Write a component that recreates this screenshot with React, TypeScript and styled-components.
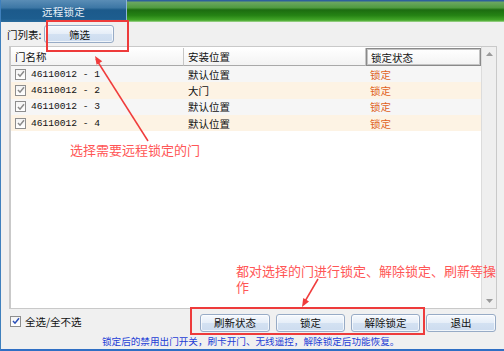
import styled, { createGlobalStyle } from "styled-components";

const GlobalStyle = createGlobalStyle`
  html, body {
    margin: 0;
    padding: 0;
    background: #f0f0f0;
  }
  * {
    box-sizing: border-box;
  }
`;

const CJK = `"Noto Sans CJK SC", "Noto Sans", sans-serif`;

const Window = styled.div`
  position: relative;
  width: 504px;
  height: 351px;
  display: flex;
  flex-direction: column;
  background: #f0f0f0;
  border-left: 1px solid #3f80bd;
  border-bottom: 2px solid #2f6fc4;
  font-family: ${CJK};
  font-size: 10.5px;
  color: #111;
  overflow: hidden;
`;

const TitleBar = styled.div`
  height: 22px;
  display: flex;
  flex-shrink: 0;
`;

const TitleTab = styled.div`
  width: 126px;
  display: flex;
  align-items: center;
  justify-content: center;
  color: #e6eef7;
  font-size: 10.5px;
  letter-spacing: 0.3px;
  background: linear-gradient(#5a8db6 0%, #3d77a5 35%, #1c5a8b 45%, #1d5d8f 85%, #2b6c9d 100%);
  border-right: 1px solid #8fb6d6;
`;

const TitleFill = styled.div`
  flex: 1;
  background: linear-gradient(
    #2d5f9c 0px,
    #2d5f9c 1px,
    #6ca762 2px,
    #4f9a40 35%,
    #1c6c10 45%,
    #258214 70%,
    #45a82a 92%,
    #a8d898 100%
  );
`;

const Toolbar = styled.div`
  height: 24px;
  display: flex;
  align-items: center;
  padding-left: 6px;
  flex-shrink: 0;
`;

const Label = styled.span`
  font-size: 10.5px;
  margin-right: 3px;
`;

const Button = styled.button<{ $w?: number }>`
  width: ${(p) => p.$w ?? 70}px;
  height: 18px;
  padding: 0;
  font-family: ${CJK};
  font-size: 10.5px;
  color: #111;
  border: 1px solid #97abc6;
  border-radius: 3px;
  background: linear-gradient(#f6f9fd 0%, #e6eef8 48%, #d3e1f2 52%, #cddcef 100%);
  box-shadow: inset 0 0 0 1px rgba(255, 255, 255, 0.7);
`;

const ListBox = styled.div`
  margin: 0 7px 0 8px;
  height: 263px;
  display: flex;
  border: 1px solid #c9c9c9;
  border-left-width: 2px;
  background: #fff;
  flex-shrink: 0;
`;

const Table = styled.div`
  flex: 1;
  display: flex;
  flex-direction: column;
`;

const HeaderRow = styled.div`
  display: grid;
  grid-template-columns: 173px 182px 1fr;
  height: 18px;
  margin-top: 1px;
`;

const HeaderCell = styled.div<{ $active?: boolean }>`
  display: flex;
  align-items: center;
  padding-left: 4px;
  font-size: 10.5px;
  background: linear-gradient(#ffffff, #f3f3f3);
  border-right: 1px solid #c6c6c6;
  border-bottom: 1px solid #a9a9a9;
  ${(p) =>
    p.$active &&
    `
    border: 1px solid #8a8a8a;
    box-shadow: inset 0 0 0 1px #c4c4c4;
  `}
`;

const Row = styled.div<{ $alt: boolean }>`
  display: grid;
  grid-template-columns: 173px 182px 1fr;
  height: 16.3px;
  align-items: center;
  background: ${(p) => (p.$alt ? "#fdf3e4" : "#f6f6f6")};
`;

const Cell = styled.div`
  display: flex;
  align-items: center;
  padding-left: 4px;
  white-space: nowrap;
`;

const DoorId = styled.span`
  font-family: "Liberation Mono", monospace;
  font-size: 9.6px;
  margin-left: 5px;
`;

const Status = styled.span`
  color: #e0621c;
  font-size: 10.5px;
`;

const Box = styled.span`
  width: 11px;
  height: 11px;
  border: 1px solid #8e8e8e;
  background: linear-gradient(#f4f4f4, #ffffff);
  display: inline-flex;
  align-items: center;
  justify-content: center;
  flex-shrink: 0;
`;

const Check = ({ blue }: { blue?: boolean }) => (
  <Box>
    <svg width="8" height="8" viewBox="0 0 8 8">
      <path
        d="M1 4 L3 6.2 L7 1.2"
        fill="none"
        stroke={blue ? "#2a4fb8" : "#8a8a8a"}
        strokeWidth="1.5"
      />
    </svg>
  </Box>
);

const ScrollBar = styled.div`
  width: 15px;
  display: flex;
  flex-direction: column;
  justify-content: space-between;
  align-items: center;
  background: #efefef;
  border-left: 1px solid #dcdcdc;
  padding: 5px 0;
`;

const Arrow = ({ down }: { down?: boolean }) => (
  <svg width="7" height="4" viewBox="0 0 7 4">
    <path d={down ? "M0 0 L7 0 L3.5 4 Z" : "M0 4 L7 4 L3.5 0 Z"} fill="#9a9a9a" />
  </svg>
);

const BottomRow = styled.div`
  height: 26px;
  display: flex;
  align-items: center;
  padding: 1px 8px 0 9px;
  flex-shrink: 0;
`;

const SelectAll = styled.label`
  display: flex;
  align-items: center;
  gap: 4px;
  font-size: 10.5px;
  margin-top: -3px;
`;

const Buttons = styled.div`
  margin-left: auto;
  display: flex;
  gap: 6px;
`;

const Footer = styled.div`
  height: 14px;
  padding-left: 101px;
  color: #1e3ed6;
  font-size: 9.6px;
  line-height: 12px;
  white-space: nowrap;
`;

const Mark = styled.div`
  position: absolute;
  border: 2px solid #ee3b3b;
  pointer-events: none;
`;

const Note = styled.div`
  position: absolute;
  color: #ff5656;
  font-size: 13px;
  line-height: 16px;
  font-family: ${CJK};
`;

const Overlay = styled.svg`
  position: absolute;
  left: 0;
  top: 0;
  pointer-events: none;
`;

const rows = [
  { id: "46110012 - 1", loc: "默认位置" },
  { id: "46110012 - 2", loc: "大门" },
  { id: "46110012 - 3", loc: "默认位置" },
  { id: "46110012 - 4", loc: "默认位置" },
];

const arrowHead = (x1: number, y1: number, x2: number, y2: number) => {
  const a = Math.atan2(y2 - y1, x2 - x1);
  const l = 9;
  const w = 0.38;
  const p1 = [x2 - l * Math.cos(a - w), y2 - l * Math.sin(a - w)];
  const p2 = [x2 - l * Math.cos(a + w), y2 - l * Math.sin(a + w)];
  return `${x2},${y2} ${p1[0]},${p1[1]} ${p2[0]},${p2[1]}`;
};

export default function App() {
  return (
    <>
      <GlobalStyle />
      <Window>
        <TitleBar>
          <TitleTab>远程锁定</TitleTab>
          <TitleFill />
        </TitleBar>
        <Toolbar>
          <Label>门列表:</Label>
          <Button $w={70}>筛选</Button>
        </Toolbar>
        <ListBox>
          <Table>
            <HeaderRow>
              <HeaderCell>门名称</HeaderCell>
              <HeaderCell>安装位置</HeaderCell>
              <HeaderCell $active>锁定状态</HeaderCell>
            </HeaderRow>
            {rows.map((r, i) => (
              <Row key={r.id} $alt={i % 2 === 1}>
                <Cell>
                  <Check />
                  <DoorId>{r.id}</DoorId>
                </Cell>
                <Cell>{r.loc}</Cell>
                <Cell>
                  <Status>锁定</Status>
                </Cell>
              </Row>
            ))}
          </Table>
          <ScrollBar>
            <Arrow />
            <Arrow down />
          </ScrollBar>
        </ListBox>
        <BottomRow>
          <SelectAll>
            <Check blue />
            全选/全不选
          </SelectAll>
          <Buttons>
            <Button $w={70}>刷新状态</Button>
            <Button $w={69}>锁定</Button>
            <Button $w={69}>解除锁定</Button>
            <Button $w={70}>退出</Button>
          </Buttons>
        </BottomRow>
        <Footer>锁定后的禁用出门开关，刷卡开门、无线遥控，解除锁定后功能恢复。</Footer>

        <Mark style={{ left: 45, top: 20, width: 83, height: 32 }} />
        <Mark style={{ left: 189, top: 307, width: 235, height: 28 }} />
        <Note style={{ left: 69, top: 142 }}>选择需要远程锁定的门</Note>
        <Note style={{ left: 235, top: 263, width: 266, lineBreak: "anywhere" }}>
          都对选择的门进行锁定、解除锁定、刷新等操作
        </Note>
        <Overlay width="504" height="351">
          <line x1="147" y1="141" x2="95" y2="59" stroke="#f03c3c" strokeWidth="1.5" />
          <polygon points={arrowHead(147, 141, 94, 56)} fill="#f03c3c" />
          <line x1="317" y1="279" x2="303" y2="303" stroke="#f03c3c" strokeWidth="1.5" />
          <polygon points={arrowHead(317, 279, 301, 307)} fill="#f03c3c" />
        </Overlay>
      </Window>
    </>
  );
}
